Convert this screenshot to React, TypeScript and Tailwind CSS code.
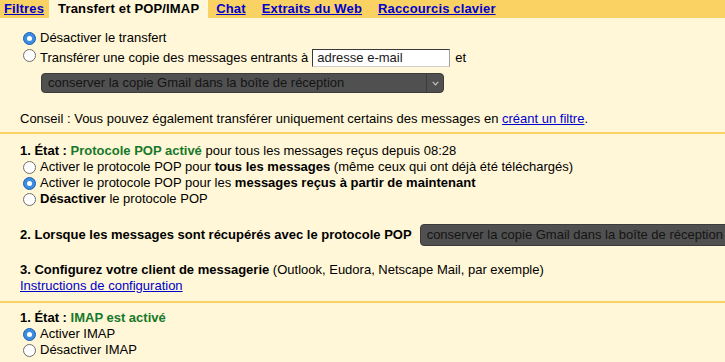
import React from "react";

function Radio({ checked }: { checked?: boolean }) {
  return checked ? (
    <span className="inline-flex w-[13px] h-[13px] shrink-0 rounded-full border border-[#1f5fae] bg-[#3b8de4] items-center justify-center">
      <span className="w-[5px] h-[5px] rounded-full bg-white" />
    </span>
  ) : (
    <span className="inline-block w-[13px] h-[13px] shrink-0 rounded-full border border-[#6e6e6e] bg-white" />
  );
}

function RadioRow({ checked, children }: { checked?: boolean; children: React.ReactNode }) {
  return (
    <div className="flex items-center h-[16px] pl-[3px]">
      <Radio checked={checked} />
      <span className="ml-[4px] whitespace-nowrap">{children}</span>
    </div>
  );
}

function DarkSelect({ tall, arrow }: { tall?: boolean; arrow?: boolean }) {
  return (
    <div
      className={
        "flex items-center w-[403px] shrink-0 rounded-[4px] bg-[#505050] border border-[#3c3c3c] text-[#141414] " +
        (tall ? "h-[22px]" : "h-[20px]")
      }
    >
      <span className="flex-1 pl-[6px] whitespace-nowrap overflow-hidden">
        conserver la copie Gmail dans la boîte de réception
      </span>
      {arrow && (
        <span className="w-[17px] h-full border-l border-[#3c3c3c] flex items-center justify-center">
          <svg width="7" height="5" viewBox="0 0 7 5">
            <path d="M0.8 0.8 L3.5 3.8 L6.2 0.8" fill="none" stroke="#c4c4c4" strokeWidth="1.2" />
          </svg>
        </span>
      )}
    </div>
  );
}

const link = "text-[#0000cc] underline";

export default function App() {
  return (
    <div className="w-[725px] h-[362px] overflow-hidden bg-[#fff7d7] text-[13px] leading-[16px] text-black font-['Liberation_Sans',Arial,sans-serif]">
      {/* Tab bar */}
      <div className="flex items-stretch h-[18px] bg-[#fad163] font-bold whitespace-nowrap tracking-[0.15px]">
        <span className={"ml-[4px] mr-[5px] flex items-center " + link}>Filtres</span>
        <span className="px-[9px] bg-[#fff7d7] flex items-center">Transfert et POP/IMAP</span>
        <span className={"ml-[8px] flex items-center " + link}>Chat</span>
        <span className={"ml-[16px] flex items-center " + link}>Extraits du Web</span>
        <span className={"ml-[16px] flex items-center " + link}>Raccourcis clavier</span>
      </div>

      {/* Section 1: forwarding */}
      <div className="pl-[20px] pt-[12px] pb-[5px] border-b-2 border-[#fad163]">
        <RadioRow checked>Désactiver le transfert</RadioRow>
        <div className="flex items-center h-[20px] mt-[2px] pl-[3px] whitespace-nowrap">
          <span className="self-start mt-[1px]">
            <Radio />
          </span>
          <span className="ml-[4px]">Transférer une copie des messages entrants à</span>
          <span className="ml-[4px] flex items-center w-[138px] h-[18px] bg-white border border-t-[#3a3a3a] border-l-[#3a3a3a] border-r-[#a0a0a0] border-b-[#d0d0d0] pl-[4px] text-[#1a1a1a]">
            adresse e-mail
          </span>
          <span className="ml-[5px]">et</span>
        </div>
        <div className="mt-[5px] ml-[21px]">
          <DarkSelect arrow />
        </div>
        <div className="mt-[18px] whitespace-nowrap">
          Conseil : Vous pouvez également transférer uniquement certains des messages en{" "}
          <span className={link}>créant un filtre</span>.
        </div>
      </div>

      {/* Section 2: POP */}
      <div className="pl-[20px] pt-[9px] pb-[7px] border-b-2 border-[#fad163]">
        <div className="whitespace-nowrap">
          <b>1. État : </b>
          <b className="text-[#16782a]">Protocole POP activé</b> pour tous les messages reçus depuis 08:28
        </div>
        <RadioRow>
          Activer le protocole POP pour <b>tous les messages</b> (même ceux qui ont déjà été téléchargés)
        </RadioRow>
        <RadioRow checked>
          Activer le protocole POP pour les <b>messages reçus à partir de maintenant</b>
        </RadioRow>
        <RadioRow>
          <b>Désactiver</b> le protocole POP
        </RadioRow>
        <div className="flex items-center h-[22px] mt-[17px] whitespace-nowrap">
          <b>2. Lorsque les messages sont récupérés avec le protocole POP</b>
          <span className="ml-[8px]">
            <DarkSelect tall />
          </span>
        </div>
        <div className="mt-[16px] whitespace-nowrap">
          <b>3. Configurez votre client de messagerie</b> (Outlook, Eudora, Netscape Mail, par exemple)
        </div>
        <div>
          <span className={link}>Instructions de configuration</span>
        </div>
      </div>

      {/* Section 3: IMAP */}
      <div className="pl-[20px] pt-[7px]">
        <div className="whitespace-nowrap">
          <b>1. État : </b>
          <b className="text-[#16782a]">IMAP est activé</b>
        </div>
        <RadioRow checked>Activer IMAP</RadioRow>
        <RadioRow>Désactiver IMAP</RadioRow>
      </div>
    </div>
  );
}
